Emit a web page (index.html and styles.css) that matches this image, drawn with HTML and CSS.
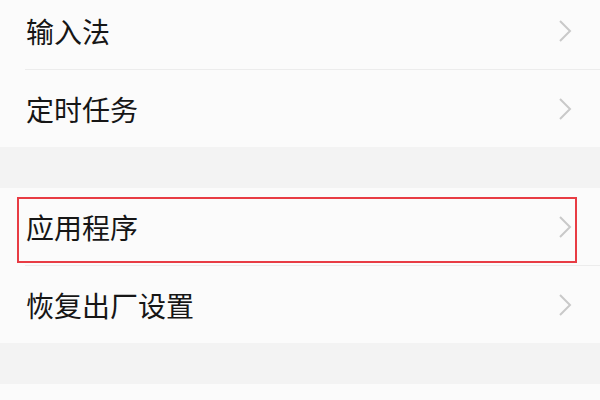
FILE: index.html
```html
<!DOCTYPE html>
<html lang="zh">
<head>
<meta charset="utf-8">
<link rel="stylesheet" href="styles.css">
</head>
<body>
<div class="page">
  <div class="group first">
    <div class="row">
      <span class="label">输入法</span>
      <svg class="chev" viewBox="0 0 14 24"><path d="M2 2 L12 12 L2 22" /></svg>
    </div>
    <div class="divider"></div>
    <div class="row">
      <span class="label">定时任务</span>
      <svg class="chev" viewBox="0 0 14 24"><path d="M2 2 L12 12 L2 22" /></svg>
    </div>
  </div>
  <div class="gap"></div>
  <div class="group">
    <div class="row highlighted">
      <span class="label">应用程序</span>
      <svg class="chev" viewBox="0 0 14 24"><path d="M2 2 L12 12 L2 22" /></svg>
      <div class="mark"></div>
    </div>
    <div class="divider"></div>
    <div class="row">
      <span class="label">恢复出厂设置</span>
      <svg class="chev" viewBox="0 0 14 24"><path d="M2 2 L12 12 L2 22" /></svg>
    </div>
  </div>
  <div class="gap"></div>
  <div class="group tail"></div>
</div>
</body>
</html>
```
FILE: styles.css
```css
html, body {
  margin: 0;
  padding: 0;
  background: #fafafa;
}
.page {
  width: 600px;
  height: 400px;
  overflow: hidden;
  font-family: "Noto Sans CJK SC", "Noto Sans", sans-serif;
}
.group {
  background: #fbfbfb;
}
.group.first {
  margin-top: -8px;
}
.group.tail {
  height: 40px;
}
.gap {
  height: 41px;
  background: #f3f3f3;
}
.row {
  position: relative;
  height: 77px;
  display: flex;
  align-items: center;
  justify-content: space-between;
  padding: 0 28px 0 26px;
}
.label {
  font-size: 28px;
  color: #161616;
  line-height: 1;
}
.chev {
  width: 14px;
  height: 24px;
  fill: none;
  stroke: #c9c9c9;
  stroke-width: 2;
}
.divider {
  height: 1px;
  margin-left: 25px;
  background: #ececec;
}
.mark {
  position: absolute;
  left: 17px;
  top: 9px;
  width: 556px;
  height: 62px;
  border: 2px solid #e83c44;
}
```
